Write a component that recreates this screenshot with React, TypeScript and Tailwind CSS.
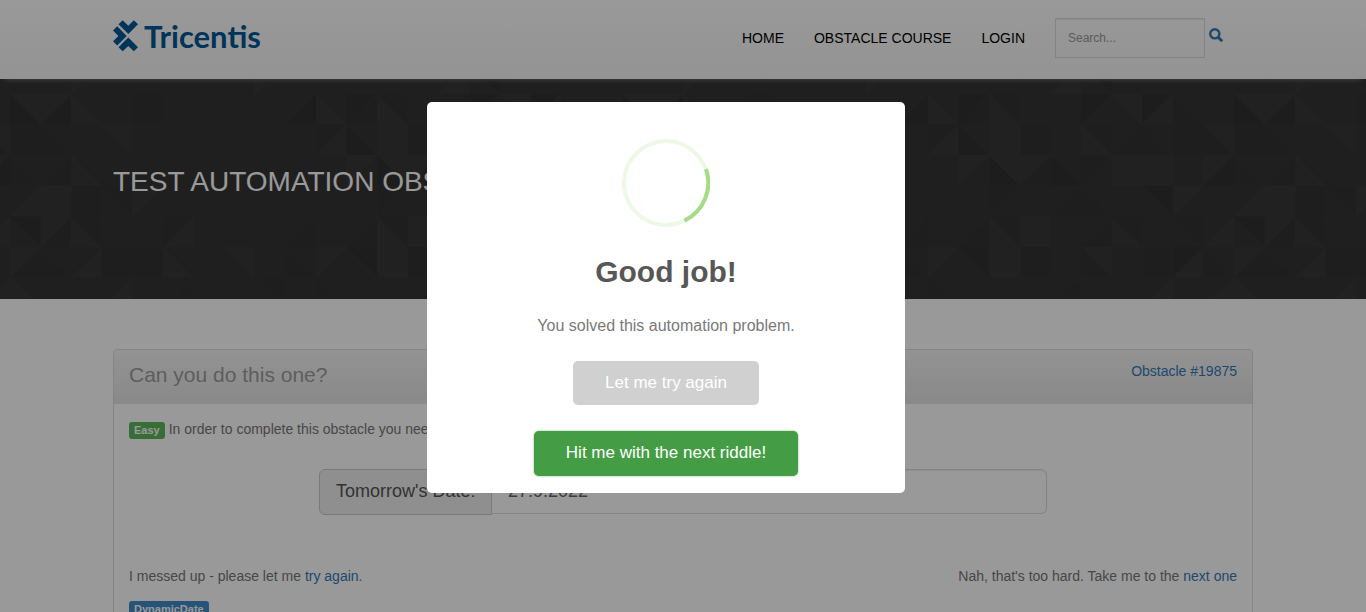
import React from "react";

const CELL = 30.6;

// Shades of the mosaic: row, column, corner the triangle fills (q = whole square), tone.
type Corner = "tl" | "tr" | "bl" | "br" | "q";
type Tone = "d" | "s" | "l";
const tiles: [number, number, Corner, Tone][] = [
  [-1, 2, "tl", "l"], [-1, 8, "tl", "l"], [-1, 14, "br", "l"], [-1, 15, "tr", "s"],
  [0, 0, "bl", "s"], [0, 0, "tr", "l"], [0, 1, "br", "s"], [0, 1, "tl", "l"], [0, 2, "bl", "l"],
  [0, 4, "q", "d"], [0, 9, "br", "s"], [0, 10, "bl", "l"], [0, 11, "tl", "s"], [0, 11, "br", "d"],
  [0, 12, "bl", "l"], [0, 12, "tr", "d"], [0, 15, "tl", "s"], [0, 16, "tr", "l"], [0, 17, "tl", "s"],
  [0, 17, "br", "l"], [0, 18, "bl", "d"],
  [1, 0, "q", "d"], [1, 1, "bl", "d"], [1, 3, "tr", "l"], [1, 10, "tl", "d"], [1, 10, "br", "l"],
  [1, 11, "bl", "s"], [1, 12, "q", "l"], [1, 13, "q", "d"], [1, 15, "bl", "l"], [1, 15, "tr", "d"],
  [1, 16, "br", "d"], [1, 17, "bl", "d"], [1, 18, "q", "d"], [1, 19, "tr", "l"], [1, 19, "bl", "d"],
  [2, 2, "bl", "l"], [2, 11, "tl", "l"], [2, 12, "bl", "s"], [2, 12, "tr", "l"], [2, 13, "tl", "l"],
  [2, 13, "br", "d"], [2, 14, "bl", "s"], [2, 15, "tl", "d"], [2, 16, "q", "l"], [2, 17, "q", "l"],
  [2, 19, "tl", "l"], [2, 19, "br", "s"], [2, 0, "bl", "d"], [2, 1, "br", "d"],
  [3, 1, "q", "l"], [3, 2, "q", "d"], [3, 3, "tr", "d"], [3, 4, "tl", "l"], [3, 12, "tl", "d"],
  [3, 14, "br", "d"], [3, 15, "bl", "d"], [3, 17, "tr", "s"], [3, 18, "tl", "l"], [3, 0, "br", "l"],
  [4, 0, "tr", "s"], [4, 1, "tl", "l"], [4, 1, "br", "d"], [4, 2, "bl", "l"], [4, 2, "tr", "d"],
  [4, 5, "tl", "d"], [4, 5, "br", "l"], [4, 9, "br", "d"], [4, 11, "br", "d"], [4, 12, "bl", "l"],
  [4, 12, "tr", "d"], [4, 13, "q", "l"], [4, 15, "br", "d"], [4, 16, "bl", "l"], [4, 16, "tr", "d"],
  [4, 18, "tr", "d"], [4, 19, "br", "l"],
  [5, 0, "tl", "l"], [5, 0, "br", "d"], [5, 1, "bl", "d"], [5, 2, "br", "l"], [5, 3, "q", "d"],
  [5, 4, "q", "d"], [5, 5, "bl", "l"], [5, 7, "tr", "l"], [5, 9, "bl", "d"], [5, 10, "tl", "l"],
  [5, 11, "tr", "s"], [5, 12, "q", "l"], [5, 13, "q", "d"], [5, 15, "tr", "l"], [5, 15, "bl", "d"],
  [5, 17, "q", "d"], [5, 18, "tl", "s"], [5, 18, "br", "l"], [5, 19, "bl", "d"],
  [6, 0, "bl", "l"], [6, 3, "br", "l"], [6, 5, "br", "d"], [6, 8, "tr", "d"], [6, 10, "bl", "d"],
  [6, 14, "br", "d"], [6, 17, "br", "l"], [6, 19, "br", "l"],
];

const tones: Record<Tone, string> = { d: "#333333", s: "#313131", l: "#373737" };

function tilePoints(row: number, col: number, corner: Corner) {
  const x = col * CELL;
  const y = 15 + row * CELL;
  const p = {
    tl: `${x},${y}`,
    tr: `${x + CELL},${y}`,
    br: `${x + CELL},${y + CELL}`,
    bl: `${x},${y + CELL}`,
  };
  if (corner === "tl") return `${p.bl} ${p.tl} ${p.tr}`;
  if (corner === "tr") return `${p.tl} ${p.tr} ${p.br}`;
  if (corner === "br") return `${p.tr} ${p.br} ${p.bl}`;
  if (corner === "bl") return `${p.tl} ${p.br} ${p.bl}`;
  return `${p.tl} ${p.tr} ${p.br} ${p.bl}`;
}

function Mosaic() {
  return (
    <svg className="absolute inset-0 h-full w-full" aria-hidden="true">
      <defs>
        <pattern id="mosaic" x="10" y="0" width="612" height="230" patternUnits="userSpaceOnUse">
          {tiles.map(([row, col, corner, tone], i) => (
            <polygon key={i} points={tilePoints(row, col, corner)} fill={tones[tone]} />
          ))}
        </pattern>
      </defs>
      <rect width="100%" height="100%" fill="url(#mosaic)" />
    </svg>
  );
}

function Logo() {
  return (
    <a href="#" className="flex h-8 items-center gap-[5px] text-[#005795]">
      <svg width="26" height="32" viewBox="0 0 26 32" fill="currentColor" aria-hidden="true">
        <path d="M5.5 4.3 9.7 .3 15.3 5.7 20.8 .3 25 4.3 15.3 13.9z" />
        <path d="M4.2 6.3 13.7 15.9 4.2 25.4 0 21.2 5.4 15.9 0 10.5z" />
        <path d="M15.3 17.6 25 27.2 20.8 31.2 15.3 25.9 9.7 31.2 5.5 27.2z" />
      </svg>
      <span className="font-['Lato',sans-serif] text-[31px] leading-8 font-bold">Tricentis</span>
    </a>
  );
}

function Header() {
  return (
    <header className="relative z-10 bg-linear-to-b from-white to-[#f6f6f6] shadow-[0_5px_5px_-5px_rgba(255,255,255,0.4)]">
      <div className="mx-auto flex h-[79px] max-w-[1170px] items-start justify-between pr-[45px] pl-[15px]">
        <div className="pt-5">
          <Logo />
        </div>
        <div className="flex items-start pt-[18px]">
          <nav className="flex gap-[30px] pr-[30px] text-sm leading-10 text-black">
            <a href="#">HOME</a>
            <a href="#">OBSTACLE COURSE</a>
            <a href="#">LOGIN</a>
          </nav>
          <input
            type="text"
            aria-label="Search"
            placeholder="Search..."
            className="h-10 w-[150px] border border-[#dcdcdc] bg-transparent px-3 text-xs shadow-[inset_0_1px_1px_rgba(0,0,0,0.08)] placeholder:text-[#999]"
          />
          <button type="button" aria-label="Submit search" className="mt-[10px] ml-1 text-[#337ab7]">
            <svg width="14" height="14" viewBox="0 0 14 14" fill="none" stroke="currentColor" aria-hidden="true">
              <circle cx="5.8" cy="5.8" r="4.6" strokeWidth="2.4" />
              <path d="M9.2 9.2 13.2 13.2" strokeWidth="3" />
            </svg>
          </button>
        </div>
      </div>
    </header>
  );
}

function Hero() {
  return (
    <section className="relative h-[220px] overflow-hidden bg-[#353535]">
      <Mosaic />
      <div className="relative mx-auto flex h-[206px] max-w-[1170px] items-center px-[15px]">
        <h1 className="text-[28px] leading-8 whitespace-nowrap text-white">TEST AUTOMATION OBSTACLE COURSE</h1>
      </div>
    </section>
  );
}

function Panel() {
  return (
    <main className="mx-auto max-w-[1170px] px-[15px] pt-[50px] text-sm leading-5 text-[#777]">
      <div className="rounded border border-[#ddd] pb-5">
        <div className="flex h-[54px] items-start justify-between rounded-t bg-linear-to-b from-[#f5f5f5] to-[#e5e5e5] px-[15px]">
          <h2 className="pt-[11px] text-[21px] leading-7 text-[#9d9d9d]">Can you do this one?</h2>
          <a href="#" className="pt-[11px] text-[#337ab7]">Obstacle #19875</a>
        </div>
        <div className="px-[15px] pt-[15px]">
          <p className="flex items-center gap-1 whitespace-nowrap">
            <span className="mt-[2px] rounded-[3px] bg-[#5cb85c] px-[5px] text-[11px] leading-[17px] font-bold text-white">Easy</span>
            In order to complete this obstacle you need to enter tomorrow&apos;s date.
          </p>
          <div className="mx-auto mt-[30px] flex max-w-[728px] items-start">
            <label
              htmlFor="tomorrow"
              className="h-[46px] w-[173px] rounded-l-md border border-[#ccc] bg-[#eee] px-4 text-lg leading-[42px] whitespace-nowrap text-[#555]"
            >
              Tomorrow&apos;s Date:
            </label>
            <input
              id="tomorrow"
              type="text"
              defaultValue="27.9.2022"
              className="h-[45px] min-w-0 flex-1 rounded-r-md border border-l-0 border-[#ddd] bg-transparent px-4 text-lg text-[#666] shadow-[inset_0_1px_1px_rgba(0,0,0,0.08)]"
            />
          </div>
          <div className="mt-[51px] flex justify-between">
            <p>
              I messed up - please let me <a href="#" className="text-[#337ab7]">try again</a>.
            </p>
            <p>
              Nah, that&apos;s too hard. Take me to the <a href="#" className="text-[#337ab7]">next one</a>
            </p>
          </div>
          <div className="mt-[15px] flex">
            <span className="rounded-[3px] bg-[#428bca] px-[5px] text-[11px] leading-[17px] font-bold text-white">DynamicDate</span>
          </div>
        </div>
      </div>
    </main>
  );
}

function SuccessDialog() {
  return (
    <div className="fixed inset-0 z-20 flex items-start justify-center bg-black/40 pt-[102px] pr-[34px]">
      <div
        role="dialog"
        aria-modal="true"
        aria-labelledby="dialog-title"
        className="flex w-[478px] flex-col items-center rounded-[5px] bg-white px-[17px] pt-[37px] pb-[17px] text-center"
      >
        <svg width="88" height="88" viewBox="0 0 88 88" fill="none" strokeWidth="4" aria-hidden="true">
          <circle cx="44" cy="44" r="42" stroke="#edf8e7" />
          <path d="M84 30.2A42 42 0 0 1 62.4 81.7" stroke="#a5dc86" />
        </svg>
        <h2 id="dialog-title" className="mt-[25px] text-[30px] leading-10 font-semibold text-[#575757]">Good job!</h2>
        <p className="mt-6 text-base leading-5 text-[#797979]">You solved this automation problem.</p>
        <button type="button" className="mt-[25px] h-11 rounded-[5px] bg-[#d0d0d0] px-8 text-[17px] font-medium text-white">
          Let me try again
        </button>
        <button
          type="button"
          className="mt-[26px] h-[45px] rounded-[5px] bg-[#449d44] px-8 pb-[2px] text-[17px] font-medium text-white shadow-[0_0_2px_rgba(68,157,68,0.8)]"
        >
          Hit me with the next riddle!
        </button>
      </div>
    </div>
  );
}

export default function App() {
  return (
    <div className="h-screen overflow-hidden bg-white font-['Liberation_Sans',Arial,sans-serif]">
      <Header />
      <Hero />
      <Panel />
      <SuccessDialog />
    </div>
  );
}
